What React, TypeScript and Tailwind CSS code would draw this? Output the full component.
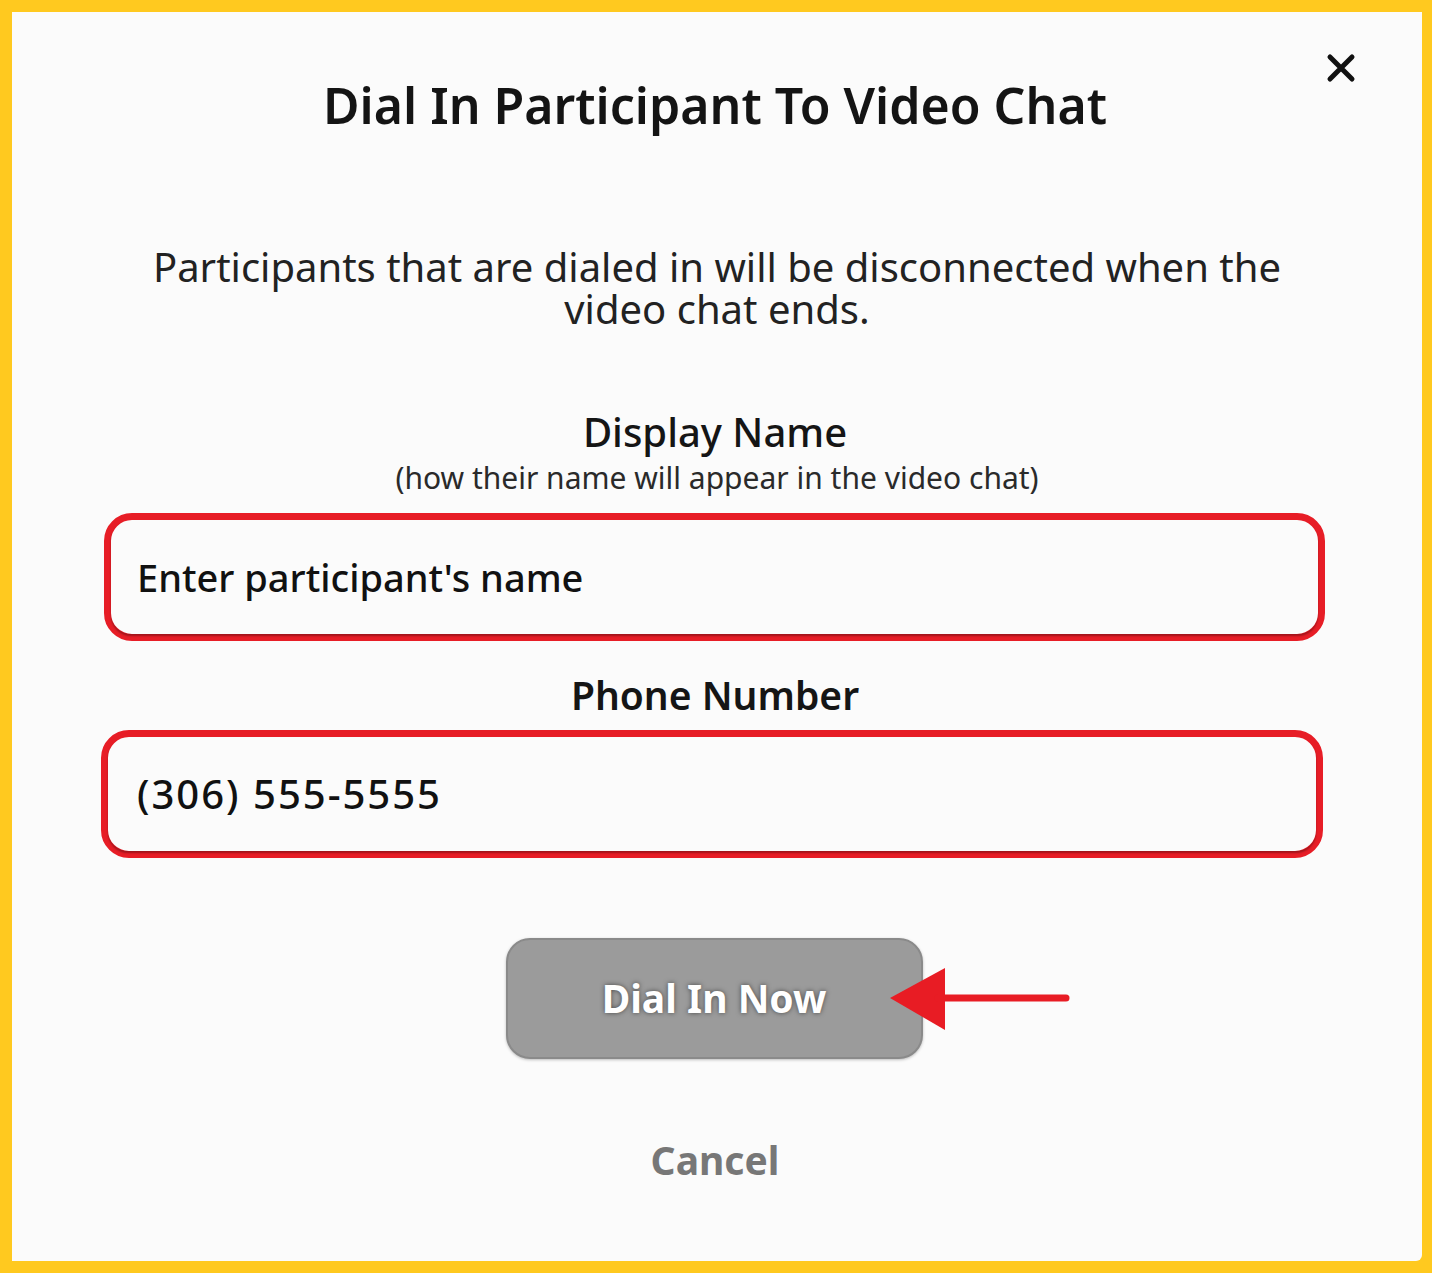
import React from "react";

export default function App() {
  return (
    <div className="w-[1432px] h-[1273px] bg-[#FFC91F] pt-[12px] pl-[12px] pr-[10px] pb-[12px] font-['Noto_Sans','Lato',sans-serif]">
      <div className="relative w-full h-full bg-[#FBFBFB] rounded-br-[6px] flex flex-col items-center">
        <button className="absolute left-[1314px] top-[41px] w-[30px] h-[30px] flex items-center justify-center" aria-label="Close">
          <svg width="30" height="30" viewBox="0 0 30 30">
            <path d="M4 4 L26 26 M26 4 L4 26" stroke="#111" strokeWidth="5" strokeLinecap="round" />
          </svg>
        </button>

        <h1 className="mt-[63px] text-[50px] leading-[60px] font-semibold text-[#141414] ml-[-4px]">
          Dial In Participant To Video Chat
        </h1>

        <div className="mt-[111px] flex flex-col items-center text-[40px] leading-[42px] text-[#222]">
          <div>Participants that are dialed in will be disconnected when the</div>
          <div>video chat ends.</div>
        </div>

        <div className="mt-[78px] text-[40px] leading-[48px] font-medium text-[#151515] ml-[-4px]">Display Name</div>
        <div className="mt-[5px] text-[30px] leading-[34px] text-[#2a2a2a]">(how their name will appear in the video chat)</div>

        <div className="self-start ml-[92px] mt-[18px] w-[1221px] h-[128px] rounded-[28px] border-[7px] border-[#E71D26] bg-[#FBFBFB]">
          <div className="w-full h-full rounded-[20px] shadow-[0_2px_2px_rgba(0,0,0,0.3)] flex items-center pl-[26px] text-[38px] font-medium text-[#111]">
            Enter participant's name
          </div>
        </div>

        <div className="mt-[30px] text-[39px] leading-[48px] font-semibold text-[#151515] ml-[-4px]">Phone Number</div>

        <div className="self-start ml-[89px] mt-[11px] w-[1222px] h-[128px] rounded-[28px] border-[7px] border-[#E71D26] bg-[#FBFBFB]">
          <div className="w-full h-full rounded-[20px] shadow-[0_2px_2px_rgba(0,0,0,0.3)] flex items-center pl-[29px] text-[40px] tracking-[2px] font-medium text-[#111]">
            (306) 555-5555
          </div>
        </div>

        <button className="mt-[80px] w-[417px] h-[121px] rounded-[24px] bg-[#9B9B9B] border-[2px] border-[#8a8a8a] shadow-[0_1px_3px_rgba(0,0,0,0.25)] text-white text-[39px] font-bold [text-shadow:0_0_5px_rgba(0,0,0,0.55)] ml-[-6px]">
          Dial In Now
        </button>

        <div className="mt-[77px] text-[39px] leading-[48px] font-bold text-[#777] ml-[-4px]">Cancel</div>

        <svg className="absolute left-[876px] top-[943px]" width="190" height="80" viewBox="0 0 190 80">
          <polygon points="2,43 57,13 57,75" fill="#E81C24" />
          <line x1="50" y1="43" x2="178" y2="43" stroke="#E81C24" strokeWidth="7" strokeLinecap="round" />
        </svg>
      </div>
    </div>
  );
}
